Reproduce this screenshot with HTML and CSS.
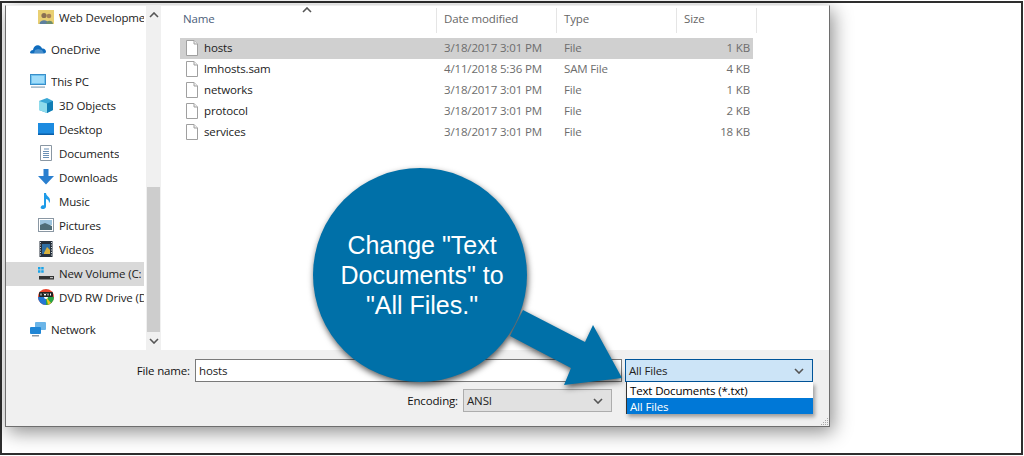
FILE: index.html
```html
<!DOCTYPE html>
<html lang="en">
<head>
  <meta charset="UTF-8" />
  <title>Save As</title>
  <link rel="stylesheet" href="styles.css">
</head>
<body>
  <svg class="defs" width="0" height="0">
    <symbol id="file" viewBox="0 0 12 16">
      <path d="M.5.5H8L11.5 4V15.500H.5Z" fill="#fff" stroke="#a0a0a0"/>
      <path d="M8 .5V4H11.500" fill="#f0f0f0" stroke="#a0a0a0"/>
    </symbol>
    <symbol id="chev-down" viewBox="0 0 10 6">
      <path d="M1 1L5 5L9 1" fill="none" stroke="#555" stroke-width="1.6"/>
    </symbol>
    <symbol id="chev-up" viewBox="0 0 10 6">
      <path d="M1 5L5 1L9 5" fill="none" stroke="#555" stroke-width="1.6"/>
    </symbol>
  </svg>

  <div class="frame">
    <div class="dialog">
      <div class="panes">
        <div class="nav">
          <div class="nav-item sub">
            <svg class="nav-icon" viewBox="0 0 16 16"><rect y="1" width="16" height="14" fill="#e9cf72"/><circle cx="6" cy="6.500" r="2.600" fill="#8a6f52"/><path d="M1.500 15c0-5 9-5 9 0z" fill="#5d7f9e"/><circle cx="11" cy="7" r="2.300" fill="#a5805a"/><path d="M8 15c0-4.500 7-4.500 7 0z" fill="#6f8f6c"/></svg>
            <span>Web Development</span>
          </div>
          <div class="nav-item top gap">
            <svg class="nav-icon" viewBox="0 0 16 16"><path d="M0 12c0-2 1.500-3 3-3 .5-3.500 3.500-5.500 6-4.500 1.500.5 2.500 1.500 3 3 2-.5 4 1 4 3 0 1-1 2-2 2H2c-1 0-2-.2-2-.5z" fill="#0f6cbd"/><path d="M5 9l3-1 4 1 2 3.500H4z" fill="#fff" opacity=".25"/></svg>
            <span>OneDrive</span>
          </div>
          <div class="nav-item top gap">
            <svg class="nav-icon" viewBox="0 0 16 16"><rect x=".5" y="1.500" width="15" height="10" fill="#6fc3f0" stroke="#3a8fc9"/><rect x="2" y="3" width="12" height="7" fill="#9fdcfa"/><rect x="1" y="13.500" width="14" height="1.200" fill="#8aa4b8"/></svg>
            <span>This PC</span>
          </div>
          <div class="nav-item sub">
            <svg class="nav-icon" viewBox="0 0 16 16"><path d="M1 4L9 1l6 3v9l-6 3-8-3z" fill="#39a7d6"/><path d="M9 6.500l6-2.500v9l-6 3z" fill="#127eb5"/><path d="M1 4l8 2.500V16l-8-3z" fill="#8fdcec"/></svg>
            <span>3D Objects</span>
          </div>
          <div class="nav-item sub">
            <svg class="nav-icon" viewBox="0 0 16 16"><rect y="2" width="16" height="12" fill="#1c8be0"/><rect y="12.500" width="16" height="1.500" fill="#0b5fa8"/></svg>
            <span>Desktop</span>
          </div>
          <div class="nav-item sub">
            <svg class="nav-icon" viewBox="0 0 16 16"><path d="M2.500.5H13.500V15.500H2.500Z" fill="#fff" stroke="#8a97a3"/><path d="M6 4h5M5 6.500h6M5 8.500h6M5 10.500h6M5 12.500h6" stroke="#6a90b5"/></svg>
            <span>Documents</span>
          </div>
          <div class="nav-item sub">
            <svg class="nav-icon" viewBox="0 0 16 16"><path d="M5.500 0h5v7H16l-8 8.500L0 7h5.500z" fill="#2a7fcf"/></svg>
            <span>Downloads</span>
          </div>
          <div class="nav-item sub">
            <svg class="nav-icon" viewBox="0 0 16 16"><path d="M6 0h2c0 3 4 3.500 4 7.500 0 1-.3 2-1 2.500.2-2.500-1-3.500-3-4v7.500c0 2-2 2.500-3.500 2.500S2 15 3 13.500c.7-1 2-1.500 3-1z" fill="#1e9be8"/></svg>
            <span>Music</span>
          </div>
          <div class="nav-item sub">
            <svg class="nav-icon" viewBox="0 0 16 16"><rect x=".5" y="1.500" width="15" height="13" fill="#fff" stroke="#8a97a3"/><rect x="2" y="3" width="12" height="5" fill="#9cc4de"/><path d="M2 8l5-2 7 3v4H2z" fill="#4f6d78"/></svg>
            <span>Pictures</span>
          </div>
          <div class="nav-item sub">
            <svg class="nav-icon" viewBox="0 0 16 16"><rect x="1.500" width="13" height="16" fill="#26303c"/><rect x="4" y="3" width="8" height="10" fill="#2f6ea3"/><path d="M6 12l3-6 3 3v4H6z" fill="#d9b23c"/><path d="M2.500 1v14M13.500 1v14" stroke="#cfd6dc" stroke-dasharray="1 1.500"/></svg>
            <span>Videos</span>
          </div>
          <div class="nav-item sub selected">
            <svg class="nav-icon" viewBox="0 0 16 16"><path d="M0 2h2.500v2.500H0zM3.200 2h2.500v2.500H3.200zM0 5.200h2.500v2.500H0zM3.200 5.200h2.500v2.500H3.200z" fill="#1aa3e8"/><rect x="1" y="11" width="15" height="3.500" fill="#333"/><rect x="12" y="12" width="3" height="1.200" fill="#bbb"/></svg>
            <span>New Volume (C:)</span>
          </div>
          <div class="nav-item sub">
            <svg class="nav-icon" viewBox="0 0 16 16"><circle cx="8" cy="8" r="8" fill="#e8442e"/><path d="M8 8L16 8A8 8 0 0 1 8 16z" fill="#28a745"/><path d="M8 8V16A8 8 0 0 1 0 8z" fill="#2477d4"/><path d="M8 8L13 14 10 15.800z" fill="#f2c81e"/><circle cx="8" cy="8" r="2" fill="#fff"/><rect x="1" y="3" width="14" height="5" rx="1" fill="#222"/><path d="M3 4.500v2M6 4.500l1 2 1-2M10 4.500v2M12.500 4.500v2" stroke="#fff"/></svg>
            <span>DVD RW Drive (D:)</span>
          </div>
          <div class="nav-item top gap">
            <svg class="nav-icon" viewBox="0 0 16 16"><rect x="5" y="1" width="11" height="8" rx="1" fill="#6bb5e8"/><rect y="6" width="11" height="7" rx="1" fill="#1f86d6"/><rect x="2" y="14" width="7" height="1.500" fill="#8a97a3"/></svg>
            <span>Network</span>
          </div>
        </div>

        <div class="scrollbar">
          <svg class="scroll-chev"><use href="#chev-up"/></svg>
          <div class="scroll-track"><div class="scroll-thumb"></div></div>
          <svg class="scroll-chev"><use href="#chev-down"/></svg>
        </div>

        <div class="files">
          <div class="file-head">
            <div class="col col-name">Name<svg class="sort-caret"><use href="#chev-up"/></svg></div>
            <div class="col">Date modified</div>
            <div class="col">Type</div>
            <div class="col col-size">Size</div>
          </div>
          <div class="file-row selected">
            <div class="file-name"><svg class="file-icon"><use href="#file"/></svg>hosts</div>
            <div>3/18/2017 3:01 PM</div><div>File</div><div class="file-size">1 KB</div>
          </div>
          <div class="file-row">
            <div class="file-name"><svg class="file-icon"><use href="#file"/></svg>lmhosts.sam</div>
            <div>4/11/2018 5:36 PM</div><div>SAM File</div><div class="file-size">4 KB</div>
          </div>
          <div class="file-row">
            <div class="file-name"><svg class="file-icon"><use href="#file"/></svg>networks</div>
            <div>3/18/2017 3:01 PM</div><div>File</div><div class="file-size">1 KB</div>
          </div>
          <div class="file-row">
            <div class="file-name"><svg class="file-icon"><use href="#file"/></svg>protocol</div>
            <div>3/18/2017 3:01 PM</div><div>File</div><div class="file-size">2 KB</div>
          </div>
          <div class="file-row">
            <div class="file-name"><svg class="file-icon"><use href="#file"/></svg>services</div>
            <div>3/18/2017 3:01 PM</div><div>File</div><div class="file-size">18 KB</div>
          </div>
        </div>
      </div>

      <div class="footer">
        <div class="form-row">
          <label class="form-label">File name:</label>
          <div class="text-input">hosts</div>
          <div class="combo">
            <span>All Files</span>
            <svg class="combo-chev"><use href="#chev-down"/></svg>
            <div class="dropdown">
              <div class="option">Text Documents (*.txt)</div>
              <div class="option active">All Files</div>
            </div>
          </div>
        </div>
        <div class="form-row encoding-row">
          <label class="form-label">Encoding:</label>
          <div class="select">
            <span>ANSI</span>
            <svg class="combo-chev"><use href="#chev-down"/></svg>
          </div>
        </div>
        <svg class="grip" viewBox="0 0 9 9"><path d="M7 1h1v1H7zM5 3h1v1H5zM7 3h1v1H7zM3 5h1v1H3zM5 5h1v1H5zM7 5h1v1H7zM1 7h1v1H1zM3 7h1v1H3zM5 7h1v1H5zM7 7h1v1H7z" fill="#a8a8a8"/></svg>
      </div>
    </div>
  </div>

  <div class="callout">
    <svg class="callout-shape" width="330" height="235" viewBox="0 0 330 235">
      <circle cx="115" cy="115" r="107"/>
      <polygon points="218,150 280,182 288,165 317,218 259,225 266,208 205,176"/>
    </svg>
    <div class="callout-text">Change "Text<br>Documents" to<br>"All Files."</div>
  </div>
</body>
</html>
```

FILE: styles.css
```css
* {
  box-sizing: border-box;
}

body {
  margin: 0;
  height: 456px;
  position: relative;
  overflow: hidden;
  background: #fff;
  font-family: "Open Sans", "Noto Sans", sans-serif;
  font-size: 11.5px;
  letter-spacing: -0.15px;
  color: #222;
}

.defs {
  position: absolute;
}

/* black outline round the whole picture */
.frame {
  height: 454px;
  margin: 1px 1px 0 0;
  padding: 2px 0 0 3px;
  border: 2px solid #2e2e2e;
}

.dialog {
  width: 825px;
  height: 422px;
  display: flex;
  flex-direction: column;
  background: #fff;
  border: 1px solid #6e6e6e;
  border-top-color: #eee;
  box-shadow: 3px 5px 18px rgba(0, 0, 0, 0.45);
}

.panes {
  height: 344px;
  display: flex;
}

/* left tree */
.nav {
  width: 140px;
  overflow: hidden;
}

.nav-item {
  height: 24px;
  width: 138px;
  padding-bottom: 2px;
  display: flex;
  align-items: center;
  white-space: nowrap;
  overflow: hidden;
}

.nav-item span {
  overflow: hidden;
}

.nav-item.gap {
  margin-top: 8px;
}

.nav-item.top {
  padding-left: 24px;
}

.nav-item.sub {
  padding-left: 32px;
}

.nav-item.selected {
  padding-right: 3px;
  background: #d9d9d9;
}

.nav-icon {
  width: 16px;
  height: 16px;
  flex: none;
  margin-right: 5px;
}

.scrollbar {
  width: 15px;
  display: flex;
  flex-direction: column;
  background: #f0f0f0;
}

.scroll-chev {
  width: 10px;
  height: 6px;
  flex: none;
  margin: 6px auto;
}

.scroll-track {
  flex: 1;
  display: flex;
  flex-direction: column;
  justify-content: flex-end;
  padding: 0 1px;
}

.scroll-thumb {
  height: 145px;
  background: #cdcdcd;
}

/* file list */
.files {
  flex: 1;
  padding-left: 15px;
}

.file-head {
  height: 32px;
  display: flex;
  align-items: flex-start;
  padding-top: 2px;
}

.col {
  width: 120px;
  height: 25px;
  padding: 0 0 5px 7px;
  display: flex;
  align-items: center;
  border-right: 1px solid #e5e5e5;
  color: #666;
}

.col-name {
  width: 261px;
  position: relative;
  color: #4c607a;
}

.col-size {
  width: 80px;
}

.sort-caret {
  position: absolute;
  left: 126px;
  top: -1px;
  width: 10px;
  height: 6px;
}

.file-row {
  width: 573px;
  margin-left: 4px;
  height: 21px;
  padding-bottom: 2px;
  display: grid;
  grid-template-columns: 264px 120px 120px 69px;
  align-items: center;
  color: #6d6d6d;
}

.file-row.selected {
  background: #d0d0d0;
}

.file-name {
  display: flex;
  align-items: center;
  padding-left: 6px;
  color: #222;
}

.file-icon {
  width: 12px;
  height: 16px;
  margin-right: 6px;
}

.file-size {
  text-align: right;
  padding-right: 3px;
}

/* bottom bar */
.footer {
  flex: 1;
  position: relative;
  padding-top: 9px;
  background: #f0f0f0;
}

.form-row {
  height: 23px;
  display: flex;
  justify-content: flex-end;
  align-items: center;
  padding-right: 16px;
}

.encoding-row {
  margin-top: 7px;
  padding-right: 217px;
}

.form-label {
  margin-right: 5px;
  color: #111;
}

.text-input {
  width: 427px;
  height: 23px;
  margin-right: 3px;
  padding-left: 3px;
  display: flex;
  align-items: center;
  background: #fff;
  border: 1px solid #7a7a7a;
}

.combo,
.select {
  height: 23px;
  padding: 0 8px 0 3px;
  display: flex;
  align-items: center;
  justify-content: space-between;
}

.combo {
  width: 188px;
  position: relative;
  background: #cce4f7;
  border: 1px solid #005499;
}

.select {
  width: 149px;
  background: #e1e1e1;
  border: 1px solid #adadad;
}

.combo-chev {
  width: 10px;
  height: 6px;
}

.dropdown {
  position: absolute;
  left: 0;
  top: 22px;
  width: 187px;
  background: #fff;
  border-left: 1px solid #333;
  box-shadow: 2px 3px 4px rgba(0, 0, 0, 0.35);
  z-index: 2;
}

.option {
  height: 16px;
  padding-left: 3px;
  display: flex;
  align-items: center;
  color: #000;
}

.option.active {
  background: #0078d7;
  color: #fff;
}

.grip {
  position: absolute;
  right: 0;
  bottom: 0;
  width: 9px;
  height: 9px;
}

/* blue speech circle over the dialog */
.callout {
  position: absolute;
  left: 305px;
  top: 160px;
  width: 330px;
  height: 235px;
  font-family: "Liberation Sans", Arial, sans-serif;
  letter-spacing: 0;
}

.callout-shape {
  display: block;
  fill: #0070a8;
  overflow: visible;
  filter: drop-shadow(1px 3px 3px rgba(0, 0, 0, 0.65));
}

.callout-text {
  position: absolute;
  left: 10px;
  top: 8px;
  width: 214px;
  height: 214px;
  display: flex;
  align-items: center;
  justify-content: center;
  text-align: center;
  font-size: 25px;
  line-height: 30px;
  color: #fff;
}
```
